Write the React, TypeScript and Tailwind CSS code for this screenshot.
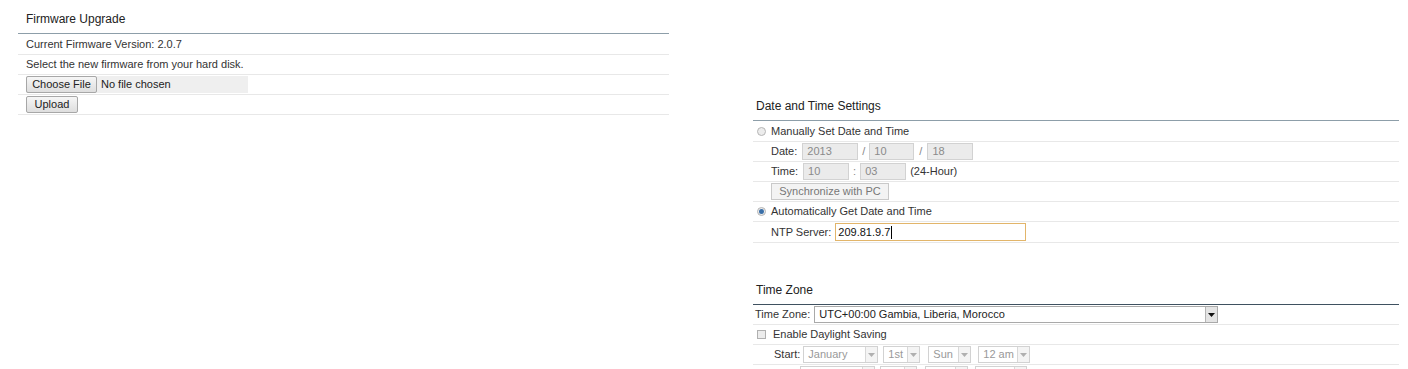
import type { ReactNode } from "react";

function Row({ children, className = "" }: { children: ReactNode; className?: string }) {
  return (
    <div className={`flex h-[20px] items-center border-b border-[#e8e8e8] ${className}`}>
      {children}
    </div>
  );
}

function Title({ text, line = "border-[#8d9ea9]", pad = "pl-[8px]" }: { text: string; line?: string; pad?: string }) {
  return (
    <div className={`flex h-[34px] items-end border-b ${line} ${pad} pb-[7px]`}>
      <span className="text-[12px] leading-[14px] text-[#222]">{text}</span>
    </div>
  );
}

function Box({ value, w }: { value: string; w: string }) {
  return (
    <div className={`flex h-[17px] ${w} items-center border border-[#d2d2d2] bg-[#ebebeb] pl-[4px] text-[#8a8a8a]`}>
      {value}
    </div>
  );
}

function Radio({ checked }: { checked?: boolean }) {
  return (
    <span className="mr-[5px] flex h-[9px] w-[9px] items-center justify-center rounded-full border border-[#b5b5b5] bg-[#ececec]">
      {checked && <span className="h-[5px] w-[5px] rounded-full bg-[#3a6fa8]" />}
    </span>
  );
}

function Dropdown({ value, w, disabled = true }: { value: string; w: string; disabled?: boolean }) {
  return (
    <div className={`flex h-[17px] ${w} items-stretch border ${disabled ? "border-[#d2d2d2] text-[#999]" : "border-[#a9a9a9] text-[#222]"} bg-white`}>
      <span className="flex flex-1 items-center overflow-hidden whitespace-nowrap pl-[4px]">{value}</span>
      <span className={`flex w-[12px] items-center justify-center border-l ${disabled ? "border-[#d8d8d8] bg-[#f4f4f4]" : "border-[#b5b5b5] bg-[#e4e4e4]"}`}>
        <svg width="7" height="4" viewBox="0 0 7 4">
          <path d="M0 0h7L3.5 4z" fill={disabled ? "#b0b0b0" : "#111"} />
        </svg>
      </span>
    </div>
  );
}

export default function App() {
  return (
    <div className="flex min-h-screen bg-white pl-[18px] font-['Liberation_Sans',Arial,sans-serif] text-[11px] text-[#333]">
      {/* Firmware Upgrade */}
      <section className="w-[651px]">
        <Title text="Firmware Upgrade" />
        <Row className="h-[21px] pl-[8px]">Current Firmware Version: 2.0.7</Row>
        <Row className="pl-[8px]">Select the new firmware from your hard disk.</Row>
        <Row className="pl-[8px]">
          <div className="flex h-[17px] w-[222px] items-center bg-[#efefef]">
            <button className="flex h-[17px] w-[71px] items-center justify-center rounded-[2px] border border-[#a7a7a7] bg-gradient-to-b from-[#f6f6f6] to-[#dedede] text-[#222]">
              Choose File
            </button>
            <span className="pl-[4px] text-[#222]">No file chosen</span>
          </div>
        </Row>
        <Row className="pl-[8px]">
          <button className="flex h-[17px] w-[52px] items-center justify-center rounded-[2px] border border-[#a7a7a7] bg-gradient-to-b from-[#f6f6f6] to-[#dedede] text-[#222]">
            Upload
          </button>
        </Row>
      </section>

      {/* Right column */}
      <div className="ml-[84px] mt-[87px] w-[646px]">
        <section>
          <Title text="Date and Time Settings" pad="pl-[3px]" />
          <Row className="h-[21px] pl-[4px]">
            <Radio />
            Manually Set Date and Time
          </Row>
          <Row className="pl-[18px]">
            <span className="mr-[5px]">Date:</span>
            <Box value="2013" w="w-[56px]" />
            <span className="mx-[4px] text-[#888]">/</span>
            <Box value="10" w="w-[45px]" />
            <span className="ml-[5px] mr-[5px] text-[#888]">/</span>
            <Box value="18" w="w-[46px]" />
          </Row>
          <Row className="pl-[18px]">
            <span className="mr-[5px]">Time:</span>
            <Box value="10" w="w-[46px]" />
            <span className="mx-[4px] text-[#888]">:</span>
            <Box value="03" w="w-[46px]" />
            <span className="ml-[4px]">(24-Hour)</span>
          </Row>
          <Row className="pl-[18px]">
            <button className="flex h-[17px] w-[118px] items-center justify-center border border-[#c9c9c9] bg-[#f3f3f3] text-[#777]">
              Synchronize with PC
            </button>
          </Row>
          <Row className="pl-[4px]">
            <Radio checked />
            Automatically Get Date and Time
          </Row>
          <Row className="h-[21px] pl-[18px]">
            <span className="mr-[4px]">NTP Server:</span>
            <div className="flex h-[18px] w-[191px] items-center border border-[#e2b56a] bg-white pl-[2px] text-[#111]">
              209.81.9.7<span className="ml-px h-[13px] w-px bg-black" />
            </div>
          </Row>
        </section>

        <section className="mt-[28px]">
          <Title text="Time Zone" line="border-[#3f5160]" pad="pl-[3px]" />
          <Row className="pl-[2px]">
            <span className="mr-[4px]">Time Zone:</span>
            <Dropdown value="UTC+00:00 Gambia, Liberia, Morocco" w="w-[404px]" disabled={false} />
          </Row>
          <Row className="pl-[4px]">
            <span className="mr-[7px] h-[9px] w-[9px] border border-[#b0b0b0] bg-[#ececec]" />
            Enable Daylight Saving
          </Row>
          <Row className="pl-[21px]">
            <span className="mr-[3px]">Start:</span>
            <Dropdown value="January" w="w-[75px]" />
            <span className="w-[5px]" />
            <Dropdown value="1st" w="w-[37px]" />
            <span className="w-[8px]" />
            <Dropdown value="Sun" w="w-[43px]" />
            <span className="w-[7px]" />
            <Dropdown value="12 am" w="w-[52px]" />
          </Row>
          <Row className="pl-[21px]">
            <span className="mr-[3px]">End:</span>
            <Dropdown value="December" w="w-[75px]" />
            <span className="w-[5px]" />
            <Dropdown value="1st" w="w-[37px]" />
            <span className="w-[8px]" />
            <Dropdown value="Sun" w="w-[43px]" />
            <span className="w-[7px]" />
            <Dropdown value="12 am" w="w-[52px]" />
          </Row>
        </section>
      </div>
    </div>
  );
}
